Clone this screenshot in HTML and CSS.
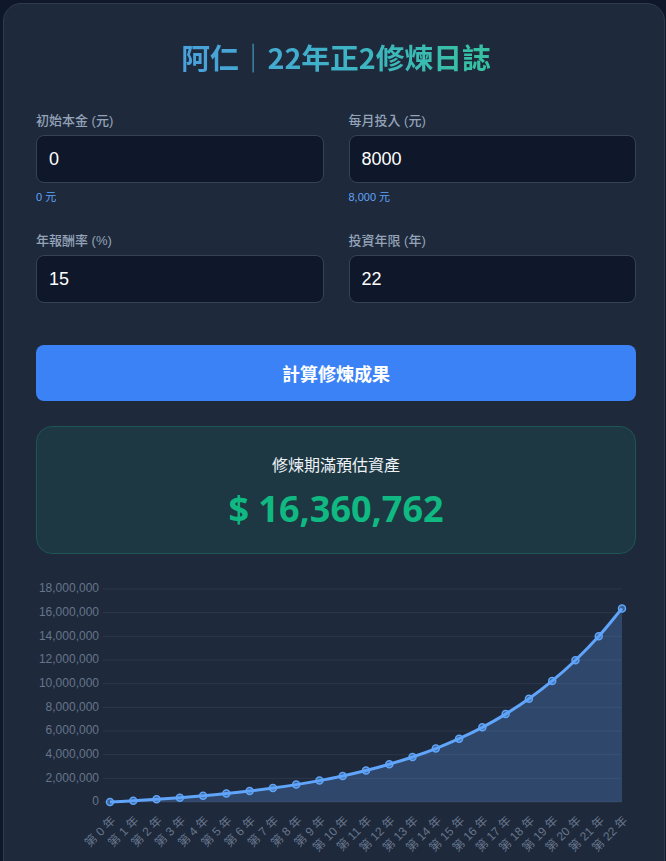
FILE: index.html
```html
<!DOCTYPE html>
<html lang="zh-Hant">
<head>
<meta charset="utf-8">
<title>阿仁｜22年正2修煉日誌</title>
<link rel="stylesheet" href="styles.css">
</head>
<body>
<main class="card">
  <h1 class="title"><span class="title-text">阿仁<span class="sep">｜</span>22年正2修煉日誌</span></h1>
  <div class="grid">
    <div class="field">
      <label class="label" for="principal">初始本金 (元)</label>
      <input class="input" id="principal" type="text" value="0">
      <div class="hint">0 元</div>
    </div>
    <div class="field">
      <label class="label" for="monthly">每月投入 (元)</label>
      <input class="input" id="monthly" type="text" value="8000">
      <div class="hint">8,000 元</div>
    </div>
    <div class="field">
      <label class="label" for="rate">年報酬率 (%)</label>
      <input class="input" id="rate" type="text" value="15">
    </div>
    <div class="field">
      <label class="label" for="years">投資年限 (年)</label>
      <input class="input" id="years" type="text" value="22">
    </div>
  </div>
  <button class="btn" type="button">計算修煉成果</button>
  <section class="result">
    <div class="result-label">修煉期滿預估資產</div>
    <div class="result-value">$ 16,360,762</div>
  </section>
  <div class="chart">
    <svg id="chart" class="chart-svg" width="600" height="286" viewBox="0 0 600 286"></svg>
  </div>
</main>
<script src="chart.js"></script>
</body>
</html>
```

FILE: styles.css
```css
* { box-sizing: border-box; }

html, body {
  margin: 0;
  padding: 0;
  background: #0f172a;
}

body {
  font-family: "Liberation Sans", "Noto Sans CJK TC", sans-serif;
  color: #e2e8f0;
  overflow: hidden;
}

.card {
  margin: 3px 0 0 3px;
  width: 662px;
  min-height: 900px;
  background: #1e293b;
  border: 1px solid #2e3b50;
  border-radius: 18px;
  padding: 33px 28px 0 32px;
}

.title {
  margin: 0;
  text-align: center;
  font-family: "Noto Sans CJK TC", sans-serif;
  font-size: 28.75px;
  font-weight: 700;
  line-height: 40px;
}

.title-text {
  display: inline-block;
  background: linear-gradient(90deg, #4aa0dc 0%, #3fb2c8 50%, #36c3a0 100%);
  -webkit-background-clip: text;
  background-clip: text;
  color: transparent;
}

.sep {
  font-weight: 300;
}

.grid {
  margin-top: 35px;
  display: grid;
  grid-template-columns: 1fr 1fr;
  column-gap: 25px;
  row-gap: 27px;
}

.field {
  display: flex;
  flex-direction: column;
}

.label {
  font-family: "Liberation Sans", "Noto Sans CJK TC", sans-serif;
  font-size: 13px;
  line-height: 18px;
  font-weight: 500;
  color: #94a3b8;
  margin-bottom: 5px;
}

.input {
  height: 48px;
  width: 100%;
  background: #0f172a;
  border: 1px solid #364357;
  border-radius: 8px;
  padding: 0 12px;
  font-family: "Liberation Sans", sans-serif;
  font-size: 18px;
  color: #ffffff;
  outline: none;
}

.hint {
  margin-top: 7px;
  font-size: 11px;
  line-height: 15px;
  color: #60a5fa;
}

.btn {
  display: block;
  width: 100%;
  margin-top: 42px;
  height: 56px;
  border: none;
  border-radius: 8px;
  background: #3b82f6;
  color: #ffffff;
  font-family: "Liberation Sans", "Noto Sans CJK TC", sans-serif;
  font-size: 18px;
  font-weight: 700;
}

.result {
  margin-top: 25px;
  background: #1d3842;
  border: 1px solid #1f5553;
  border-radius: 16px;
  padding: 26px 0 22px;
  text-align: center;
}

.result-label {
  font-family: "Noto Sans CJK TC", sans-serif;
  font-size: 16px;
  line-height: 22px;
  color: #eef2f7;
}

.result-value {
  margin-top: 12px;
  font-family: "Open Sans", sans-serif;
  font-size: 36px;
  line-height: 44px;
  font-weight: 700;
  color: #10b981;
}

.chart {
  margin-top: 22px;
}

.chart-svg {
  display: block;
  overflow: visible;
  font-family: "Liberation Sans", "Noto Sans CJK TC", sans-serif;
}

.grid-line {
  stroke: #2b374a;
  stroke-width: 1;
}

.y-label, .x-label {
  font-size: 12px;
  fill: #66758b;
}

.area {
  fill: rgba(96, 165, 250, 0.25);
}

.line {
  fill: none;
  stroke: #60a5fa;
  stroke-width: 3;
  stroke-linejoin: round;
}

.point {
  fill: rgba(96, 165, 250, 0.45);
  stroke: #60a5fa;
  stroke-width: 1.5;
}
```

FILE: chart.js
```js
(function () {
  var NS = 'http://www.w3.org/2000/svg';
  var svg = document.getElementById('chart');
  var left = 74, right = 586, top = 13, bottom = 226, max = 18e6;
  var r = 0.15 / 12, pmt = 8000, years = 22;

  function el(name, attrs, text) {
    var e = document.createElementNS(NS, name);
    for (var k in attrs) e.setAttribute(k, attrs[k]);
    if (text !== undefined) e.textContent = text;
    svg.appendChild(e);
    return e;
  }

  var vals = [];
  for (var y = 0; y <= years; y++) {
    var n = 12 * y;
    vals.push(n === 0 ? 0 : pmt * (Math.pow(1 + r, n) - 1) / r);
  }

  for (var k = 0; k <= 9; k++) {
    var gy = bottom - k * (bottom - top) / 9;
    el('line', { 'class': 'grid-line', x1: 67, x2: right, y1: gy, y2: gy });
    el('text', { 'class': 'y-label', x: 63, y: gy, 'text-anchor': 'end', 'dominant-baseline': 'middle' },
      (k * 2000000).toLocaleString('en-US'));
  }

  var pts = vals.map(function (v, i) {
    return { x: left + i * (right - left) / years, y: bottom - v / max * (bottom - top) };
  });

  var t = 0.4;
  var cps = pts.map(function (p, i) {
    var p0 = pts[i - 1] || p, p2 = pts[i + 1] || p;
    var d01 = Math.hypot(p.x - p0.x, p.y - p0.y);
    var d12 = Math.hypot(p2.x - p.x, p2.y - p.y);
    var s01 = d01 / (d01 + d12 || 1), s12 = d12 / (d01 + d12 || 1);
    var fa = t * s01, fb = t * s12;
    return {
      px: p.x - fa * (p2.x - p0.x), py: Math.min(bottom, p.y - fa * (p2.y - p0.y)),
      nx: p.x + fb * (p2.x - p0.x), ny: Math.min(bottom, p.y + fb * (p2.y - p0.y))
    };
  });

  var d = 'M' + pts[0].x + ' ' + pts[0].y;
  for (var i = 0; i < pts.length - 1; i++) {
    d += ' C' + cps[i].nx + ' ' + cps[i].ny + ' ' + cps[i + 1].px + ' ' + cps[i + 1].py + ' ' + pts[i + 1].x + ' ' + pts[i + 1].y;
  }

  el('path', { 'class': 'area', d: d + ' L' + right + ' ' + bottom + ' L' + left + ' ' + bottom + ' Z' });
  el('path', { 'class': 'line', d: d });

  pts.forEach(function (p) {
    el('circle', { 'class': 'point', cx: p.x, cy: p.y, r: 3.5 });
  });

  pts.forEach(function (p, i) {
    var ax = p.x + 4, ay = bottom + 17;
    el('text', {
      'class': 'x-label', x: ax, y: ay, 'text-anchor': 'end', 'dominant-baseline': 'middle',
      transform: 'rotate(-45 ' + ax + ' ' + ay + ')'
    }, '第 ' + i + ' 年');
  });
})();
```
